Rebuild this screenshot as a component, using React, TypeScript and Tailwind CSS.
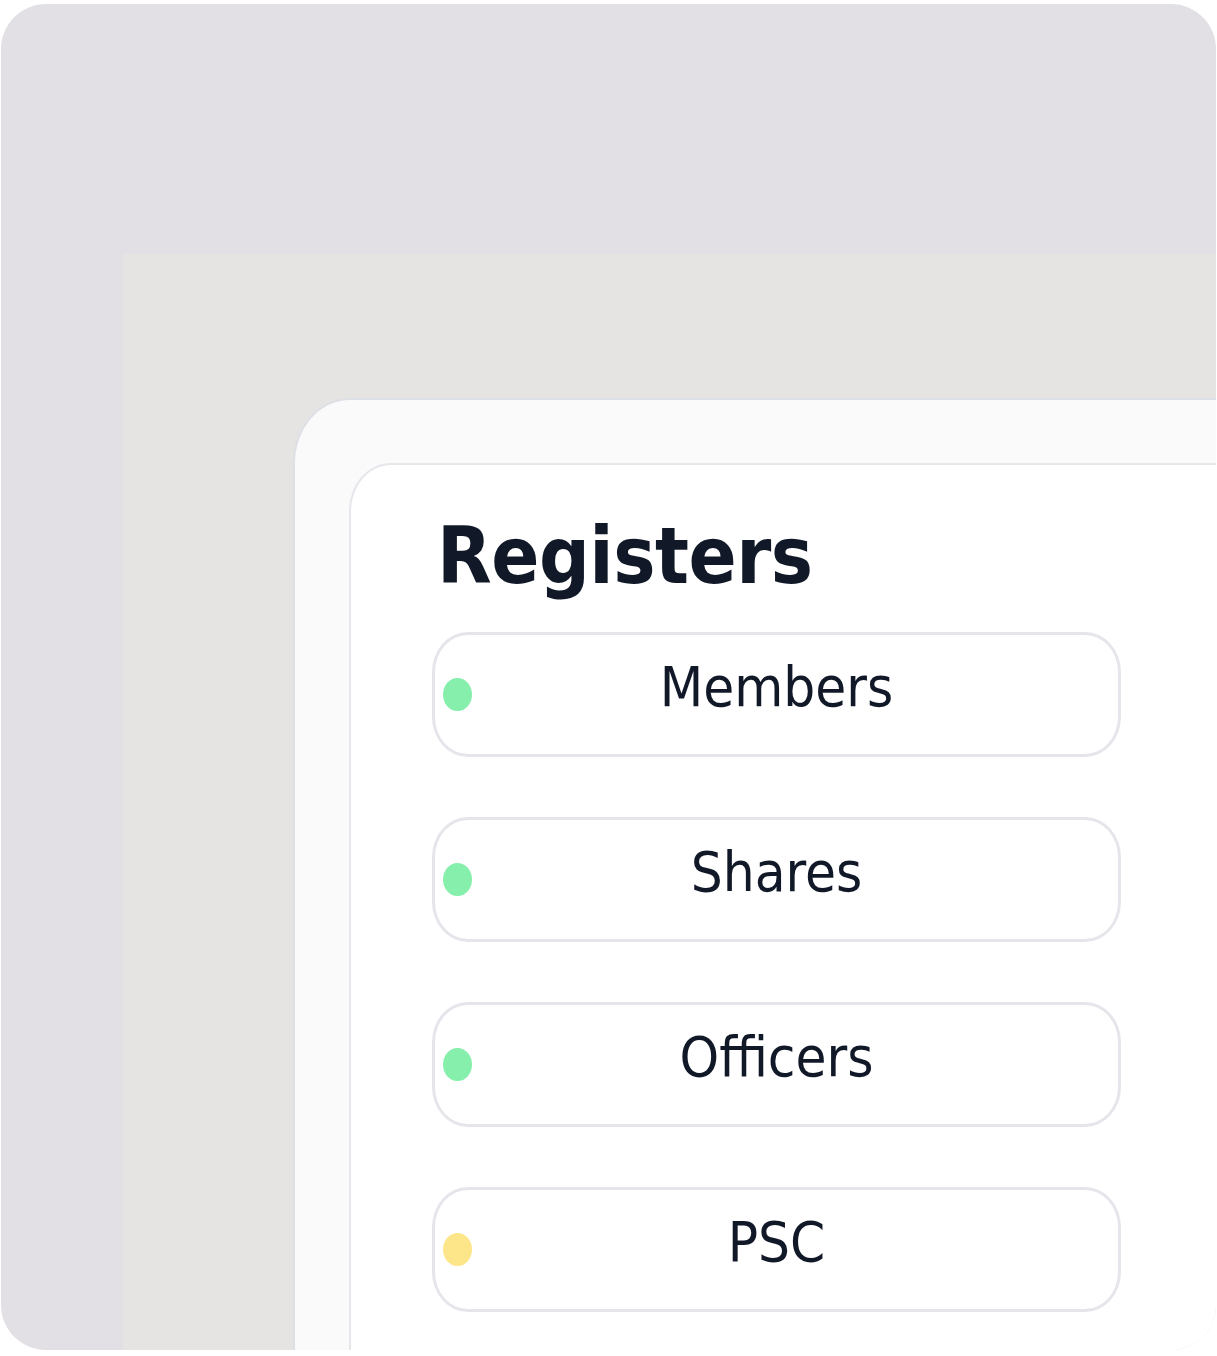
const registers = [
  { name: 'Members', status: 'ok' },
  { name: 'Shares', status: 'ok' },
  { name: 'Officers', status: 'ok' },
  { name: 'PSC', status: 'pending' },
];

function RegisterRow({ name, status }: { name: string; status: string }) {
  return (
    <div className="grid grid-cols-[29px_1fr_29px] items-center w-[689px] h-[125px] shrink-0 px-[8px] border-[3px] border-[#e5e6eb] rounded-[36px_/_40px] bg-white">
      <span
        className={
          status === 'ok'
            ? 'w-[29px] h-[33px] rounded-[50%] bg-[#86efac]'
            : 'w-[29px] h-[33px] rounded-[50%] bg-[#fde68a]'
        }
      />
      <span className="text-center text-[56px] leading-none text-[#111827] mb-[15px]">{name}</span>
      <span />
    </div>
  );
}

export default function App() {
  return (
    <div
      className="w-[1217px] h-[1356px] bg-white pt-[4px] pl-[1px]"
      style={{ fontFamily: '"DejaVu Sans Condensed", "DejaVu Sans", sans-serif', fontStretch: 'condensed' }}
    >
      <div className="w-[1215px] h-[1346px] rounded-[45px] bg-[#e2e0e4] overflow-hidden pl-[122px] pt-[250px]">
        <div className="w-[1200px] h-[1200px] bg-[#e5e4e2] pl-[170px] pt-[144px]">
          <div className="w-[1100px] h-[1100px] bg-[#fafafa] border-2 border-[#dde0e6] rounded-tl-[57px_65px] pl-[54px] pt-[63px]">
            <div className="w-[1000px] h-[1000px] bg-white border-2 border-[#e5e7eb] rounded-tl-[42px_48px] pl-[81px] pt-[52px]">
              <h1 className="text-[79px] leading-none font-bold text-[#111827] ml-[5px] tracking-[-0.5px]">Registers</h1>
              <div className="flex flex-col gap-[60px] mt-[36px]">
                {registers.map((r) => (
                  <RegisterRow key={r.name} name={r.name} status={r.status} />
                ))}
              </div>
            </div>
          </div>
        </div>
      </div>
    </div>
  );
}
